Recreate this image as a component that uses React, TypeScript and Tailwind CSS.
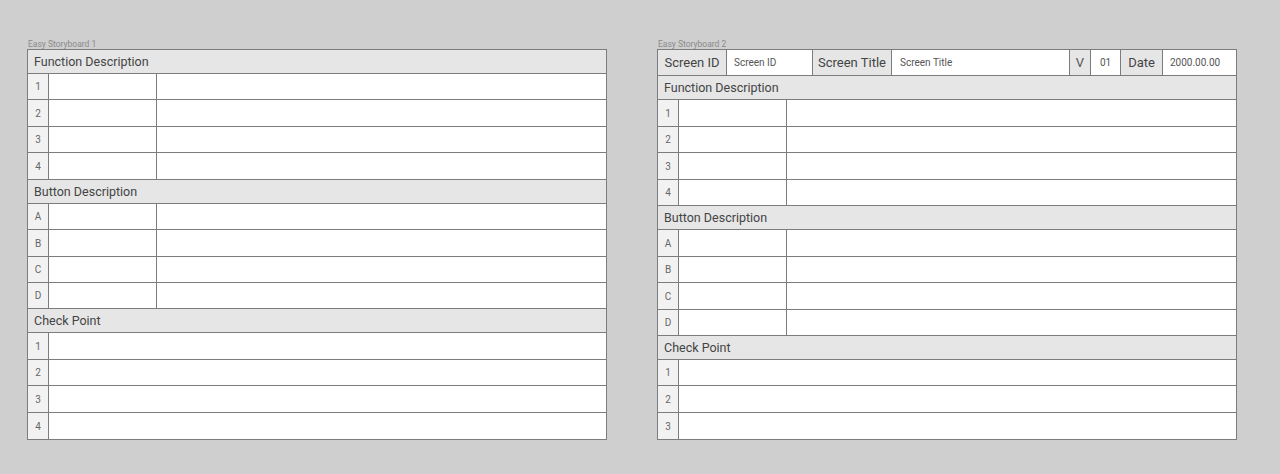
import React from "react";

const font = { fontFamily: "Roboto, 'Noto Sans', sans-serif" };

function Section({ title, h }: { title: string; h: number }) {
  return (
    <div
      className="flex items-center bg-[#e6e6e6] border-b border-[#7c7c7c] pl-[6px] pt-[1px] text-[12.5px] text-[#444]"
      style={{ height: h }}
    >
      {title}
    </div>
  );
}

function Row({ label, h, three, last }: { label: string; h: number; three: boolean; last?: boolean }) {
  return (
    <div className={"flex " + (last ? "" : "border-b border-[#7c7c7c]")} style={{ height: h }}>
      <div className="w-[21px] shrink-0 bg-[#f2f2f2] border-r border-[#7c7c7c] flex items-center justify-center text-[10px] text-[#666]">
        {label}
      </div>
      {three && <div className="w-[108px] shrink-0 bg-white border-r border-[#7c7c7c]" />}
      <div className="flex-1 bg-white" />
    </div>
  );
}

function Board({ name, header, heights, checks }: { name: string; header: boolean; heights: number[]; checks: number }) {
  let i = 0;
  const next = () => heights[i++];
  const rows: React.ReactNode[] = [];
  if (header) {
    rows.push(
      <div key="hdr" className="flex border-b border-[#7c7c7c]" style={{ height: next() }}>
        <div className="w-[69px] shrink-0 bg-[#e6e6e6] border-r border-[#7c7c7c] flex items-center justify-center text-[13px] text-[#444]">Screen ID</div>
        <div className="w-[86px] shrink-0 bg-white border-r border-[#7c7c7c] flex items-center pl-[7px] text-[10px] text-[#555]">Screen ID</div>
        <div className="w-[79px] shrink-0 bg-[#e6e6e6] border-r border-[#7c7c7c] flex items-center justify-center text-[13px] text-[#444]">Screen Title</div>
        <div className="w-[178px] shrink-0 bg-white border-r border-[#7c7c7c] flex items-center pl-[8px] text-[10px] text-[#555]">Screen Title</div>
        <div className="w-[21px] shrink-0 bg-[#e6e6e6] border-r border-[#7c7c7c] flex items-center justify-center text-[13px] text-[#555]">V</div>
        <div className="w-[30px] shrink-0 bg-white border-r border-[#7c7c7c] flex items-center justify-center text-[10px] text-[#555]">01</div>
        <div className="w-[42px] shrink-0 bg-[#e6e6e6] border-r border-[#7c7c7c] flex items-center justify-center text-[13px] text-[#444]">Date</div>
        <div className="flex-1 bg-white flex items-center pl-[7px] text-[10px] text-[#555]">2000.00.00</div>
      </div>
    );
  }
  rows.push(<Section key="f" title="Function Description" h={next()} />);
  ["1", "2", "3", "4"].forEach((l) => rows.push(<Row key={"f" + l} label={l} h={next()} three />));
  rows.push(<Section key="b" title="Button Description" h={next()} />);
  ["A", "B", "C", "D"].forEach((l) => rows.push(<Row key={"b" + l} label={l} h={next()} three />));
  rows.push(<Section key="c" title="Check Point" h={next()} />);
  const cl = ["1", "2", "3", "4"].slice(0, checks);
  cl.forEach((l, k) => rows.push(<Row key={"c" + l} label={l} h={next()} three={false} last={k === cl.length - 1} />));
  return (
    <div className="flex flex-col w-[580px]">
      <div className="text-[8.5px] leading-[9px] text-[#8a8a8a] h-[9px] pl-[1px]">{name}</div>
      <div className="border border-[#7c7c7c] bg-white flex flex-col h-[391px] overflow-hidden">{rows}</div>
    </div>
  );
}

export default function App() {
  return (
    <div className="w-[1280px] h-[474px] bg-[#cfcfcf] pt-[40px] pl-[27px] flex gap-[50px]" style={font}>
      <Board
        name="Easy Storyboard 1"
        header={false}
        heights={[24, 26, 27, 26, 27, 24, 26, 27, 26, 26, 24, 27, 26, 27, 26]}
        checks={4}
      />
      <Board
        name="Easy Storyboard 2"
        header
        heights={[26, 24, 27, 26, 27, 26, 24, 27, 26, 27, 26, 24, 26, 27, 26]}
        checks={3}
      />
    </div>
  );
}
